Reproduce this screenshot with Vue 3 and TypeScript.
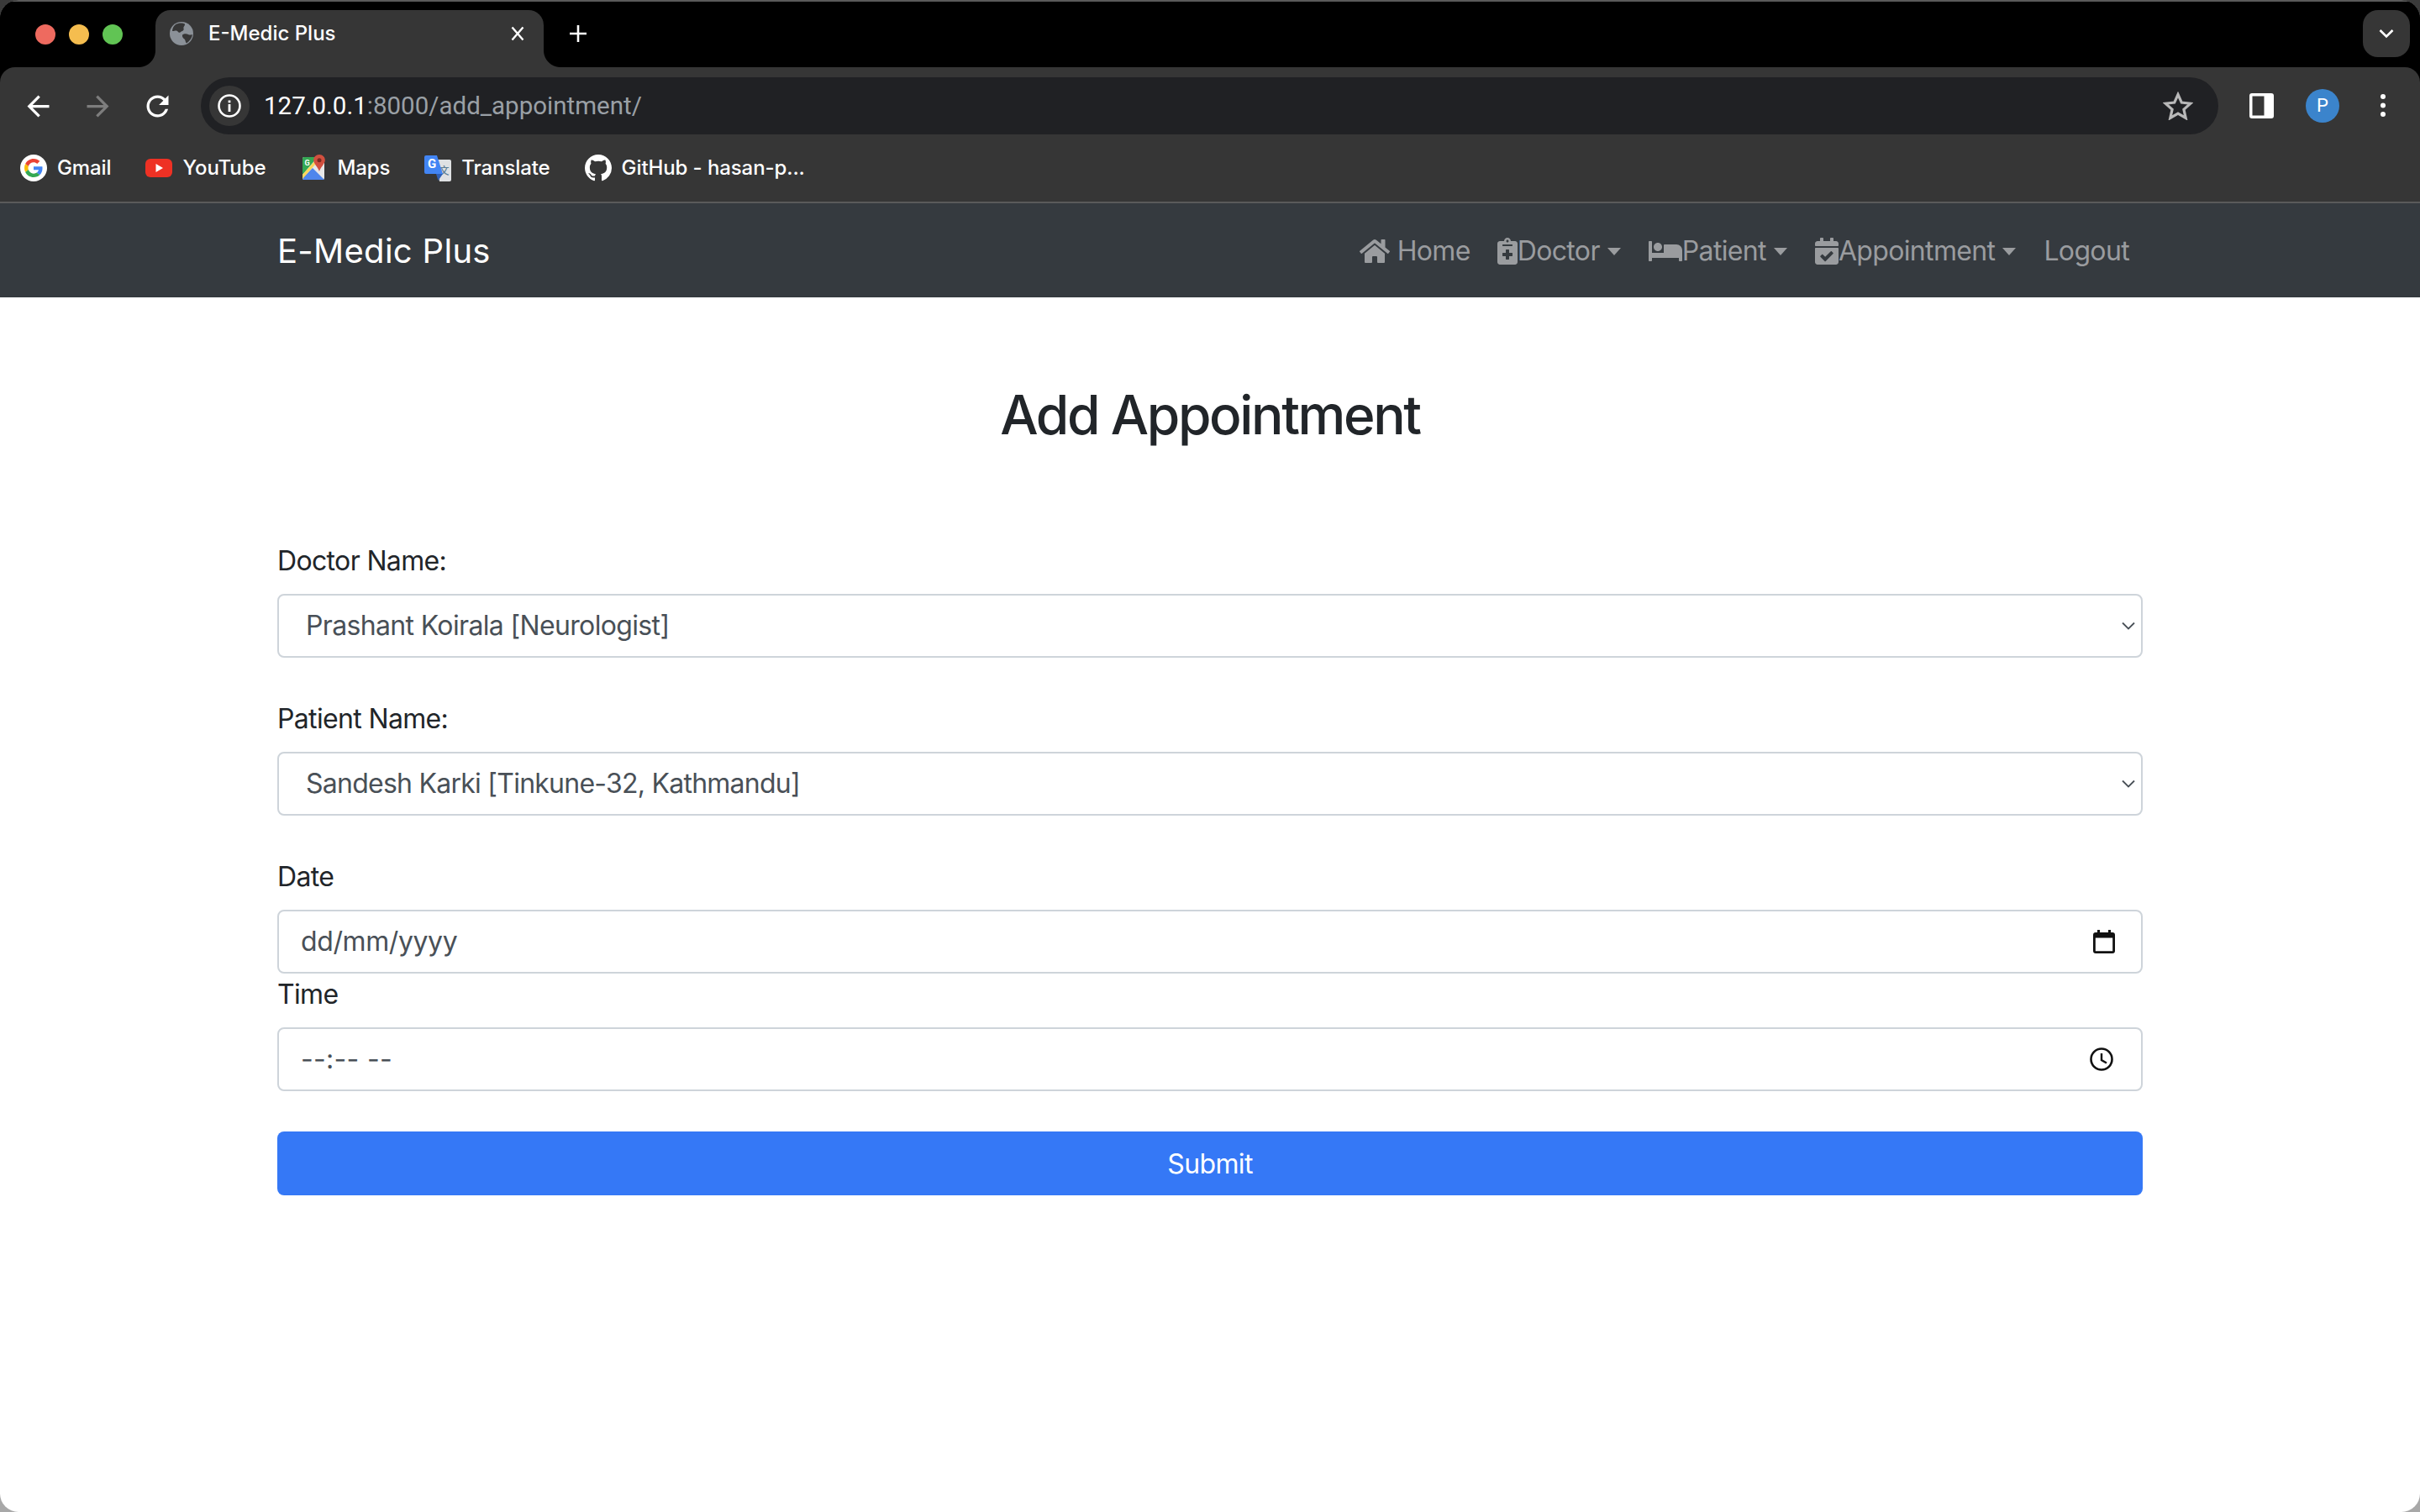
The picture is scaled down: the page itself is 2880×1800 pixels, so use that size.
<template>
  <div class="window">
    <div class="chrome">
      <header class="tabbar">
        <div class="lights">
          <span class="light red"></span>
          <span class="light amber"></span>
          <span class="light green"></span>
        </div>
        <div class="tab">
          <svg class="favicon" viewBox="0 0 28 28">
            <circle cx="14" cy="14" r="14" fill="#8b9198" />
            <path d="M8 2.500c3-1.500 8-1.500 10 0 .5 2-2 3-1.500 5.500 1 2.500-2.500 3-4 4.500-2.500 1-2.500-1.500-4.500-2-1.500-.5-3.500 1-5 .5C3 7.500 5 4 8 2.500z" fill="#363636" />
            <path d="M15 15.500c2-1.500 5-1.500 7-.5 1.500 1 3.500.5 5 0-.5 4-3 8-7 10.500-1.500-1-1-3.500-2.500-5-1.500-1-3-2.500-2.500-5z" fill="#363636" />
          </svg>
          <span class="tab-title">E-Medic Plus</span>
          <svg class="tab-close" viewBox="0 0 16 18">
            <path d="M1.500 1.500l13 15M14.500 1.500l-13 15" stroke="#fff" stroke-width="2.400" fill="none" />
          </svg>
        </div>
        <svg class="tab-new" viewBox="0 0 20 20">
          <path d="M10 0v20M0 10h20" stroke="#fff" stroke-width="2.600" fill="none" />
        </svg>
        <div class="tab-search">
          <svg viewBox="0 0 18 12" width="18" height="12">
            <path d="M1.500 2l7.500 7.500L16.500 2" stroke="#fff" stroke-width="2.600" fill="none" />
          </svg>
        </div>
      </header>

      <div class="toolbar">
        <svg class="tool" viewBox="0 0 24 24">
          <path d="M20 11H7.830l5.590-5.590L12 4l-8 8 8 8 1.410-1.410L7.830 13H20v-2z" fill="#fff" />
        </svg>
        <svg class="tool" viewBox="0 0 24 24">
          <path d="M4 11h12.170l-5.590-5.590L12 4l8 8-8 8-1.410-1.410L16.170 13H4v-2z" fill="#7d7d7d" />
        </svg>
        <svg class="tool" viewBox="0 0 24 24">
          <path d="M17.650 6.350C16.200 4.900 14.210 4 12 4c-4.420 0-7.990 3.580-7.990 8s3.570 8 7.990 8c3.730 0 6.840-2.550 7.730-6h-2.080c-.82 2.330-3.040 4-5.650 4-3.310 0-6-2.690-6-6s2.690-6 6-6c1.660 0 3.140.69 4.220 1.780L13 11h7V4l-2.350 2.350z" fill="#fff" />
        </svg>
        <div class="omnibox">
          <span class="site-chip">
            <svg viewBox="0 0 28 28" width="28" height="28">
              <circle cx="14" cy="14" r="12.500" stroke="#fff" stroke-width="2.600" fill="none" />
              <rect x="12.600" y="12" width="2.800" height="9" fill="#fff" />
              <rect x="12.600" y="7.500" width="2.800" height="2.800" fill="#fff" />
            </svg>
          </span>
          <span class="url"><b>127.0.0.1</b>:8000/add_appointment/</span>
          <svg class="star" viewBox="0 0 36 34">
            <path d="M18 3.500l4.300 9.600 10.500 1.100-7.900 7 2.300 10.300L18 26.200 8.800 31.500l2.300-10.300-7.900-7 10.500-1.100z" stroke="#b8b8b8" stroke-width="3.200" fill="none" />
          </svg>
        </div>
        <svg class="side-panel" viewBox="0 0 29 30">
          <rect width="29" height="30" rx="3" fill="#fff" />
          <rect x="3.500" y="3.500" width="14" height="23" fill="#363636" />
        </svg>
        <span class="avatar">P</span>
        <svg class="kebab" viewBox="0 0 8 30">
          <circle cx="4" cy="4" r="3" fill="#fff" />
          <circle cx="4" cy="14.500" r="3" fill="#fff" />
          <circle cx="4" cy="25" r="3" fill="#fff" />
        </svg>
      </div>

      <div class="bookmarks">
        <a class="bookmark">
          <span class="google">
            <svg viewBox="0 0 48 48" width="22" height="22">
              <path fill="#ea4335" d="M24 9.500c3.540 0 6.710 1.220 9.210 3.600l6.850-6.850C35.900 2.380 30.470 0 24 0 14.620 0 6.510 5.380 2.560 13.220l7.980 6.190C12.430 13.720 17.740 9.500 24 9.500z" />
              <path fill="#4285f4" d="M46.980 24.550c0-1.570-.15-3.090-.38-4.550H24v9.020h12.940c-.58 2.960-2.260 5.480-4.780 7.180l7.730 6c4.510-4.180 7.090-10.360 7.090-17.650z" />
              <path fill="#fbbc05" d="M10.530 28.590c-.5-1.450-.78-2.990-.78-4.590s.27-3.140.78-4.590l-7.980-6.190C.92 16.460 0 20.120 0 24c0 3.880.92 7.540 2.560 10.780l7.970-6.190z" />
              <path fill="#34a853" d="M24 48c6.480 0 11.930-2.130 15.890-5.810l-7.730-6c-2.150 1.450-4.920 2.300-8.160 2.300-6.260 0-11.570-4.220-13.470-9.910l-7.980 6.190C6.510 42.620 14.620 48 24 48z" />
            </svg>
          </span>
          Gmail
        </a>
        <a class="bookmark">
          <svg class="bm-icon" viewBox="0 0 32 32">
            <rect y="5" width="32" height="22" rx="6" fill="#ee3124" />
            <path d="M12.500 11v10l8.500-5z" fill="#fff" />
          </svg>
          YouTube
        </a>
        <a class="bookmark">
          <svg class="bm-icon" viewBox="0 0 32 32">
            <rect x="3" y="3" width="26" height="27" rx="2" fill="#e8e8e8" />
            <path d="M3 5a2 2 0 0 1 2-2h16L3 24z" fill="#34a853" />
            <path d="M3 28l12-12 14 14H5a2 2 0 0 1-2-2z" fill="#4f86ec" />
            <path d="M3 24L19 6l2.500 2L3 29z" fill="#fbd75b" />
            <text x="5.500" y="13" class="maps-g">G</text>
            <path d="M23 0c-4 0-6.800 3-6.800 6.500 0 4.500 5 8 6.800 13.500 1.800-5.500 6.800-9 6.800-13.500C29.800 3 27 0 23 0z" fill="#d2503f" />
            <circle cx="23" cy="6.800" r="2.500" fill="#7a2a20" />
          </svg>
          Maps
        </a>
        <a class="bookmark">
          <svg class="bm-icon" viewBox="0 0 32 32">
            <path d="M14 6h16a2 2 0 0 1 2 2v22a2 2 0 0 1-2 2H18z" fill="#dfe1e3" />
            <text x="17.500" y="24" class="translate-zh">文</text>
            <path d="M2 1h13l7 22H2a2 2 0 0 1-2-2V3a2 2 0 0 1 2-2z" fill="#4285f4" />
            <path d="M14 23h8l-5.500 8z" fill="#2f5fb5" />
            <text x="4" y="16" class="translate-g">G</text>
          </svg>
          Translate
        </a>
        <a class="bookmark">
          <svg class="bm-icon" viewBox="0 0 16 16">
            <path fill="#fff" d="M8 0C3.580 0 0 3.580 0 8c0 3.540 2.290 6.530 5.470 7.590.4.07.55-.17.55-.38 0-.19-.01-.82-.01-1.490-2.010.37-2.530-.49-2.690-.94-.09-.23-.48-.94-.82-1.130-.28-.15-.68-.52-.01-.53.63-.01 1.080.58 1.230.82.72 1.210 1.870.87 2.330.66.07-.52.28-.87.51-1.070-1.780-.2-3.640-.89-3.640-3.950 0-.87.31-1.590.82-2.150-.08-.2-.36-1.020.08-2.120 0 0 .67-.21 2.200.82.64-.18 1.320-.27 2-.27.68 0 1.360.09 2 .27 1.530-1.040 2.200-.82 2.200-.82.44 1.100.16 1.920.08 2.120.51.56.82 1.270.82 2.150 0 3.070-1.870 3.750-3.650 3.950.29.25.54.73.54 1.480 0 1.070-.01 1.930-.01 2.200 0 .21.15.46.55.38A8.013 8.013 0 0016 8c0-4.420-3.580-8-8-8z" />
          </svg>
          GitHub - hasan-p...
        </a>
      </div>
    </div>

    <nav class="navbar">
      <a class="brand">E-Medic Plus</a>
      <ul class="nav-list">
        <li v-for="item in navItems" :key="item.label" class="nav-link">
          <svg v-if="item.path" class="nav-icon" :viewBox="item.box" :style="{ width: item.width + 'px' }">
            <path :d="item.path" fill="currentColor" />
          </svg>
          <span v-if="item.spaced" class="nav-space"></span>
          {{ item.label }}
          <span v-if="item.caret" class="caret"></span>
        </li>
      </ul>
    </nav>

    <main class="container">
      <h1 class="title">Add Appointment</h1>
      <form @submit.prevent>
        <div class="group">
          <label class="label">Doctor Name:</label>
          <div class="control select-control">
            <select v-model="doctor" class="select">
              <option v-for="d in doctors" :key="d">{{ d }}</option>
            </select>
            <svg class="chevron" viewBox="0 0 16 10">
              <path d="M1 1.500l7 7 7-7" stroke="#495057" stroke-width="1.800" fill="none" />
            </svg>
          </div>
        </div>
        <div class="group">
          <label class="label">Patient Name:</label>
          <div class="control select-control">
            <select v-model="patient" class="select tight">
              <option v-for="p in patients" :key="p">{{ p }}</option>
            </select>
            <svg class="chevron" viewBox="0 0 16 10">
              <path d="M1 1.500l7 7 7-7" stroke="#495057" stroke-width="1.800" fill="none" />
            </svg>
          </div>
        </div>
        <label class="label">Date</label>
        <div class="control">
          <input class="input" type="text" value="dd/mm/yyyy" />
          <svg class="calendar" viewBox="0 0 26 28">
            <path d="M5 0h3v3h10V0h3v3h2a3 3 0 0 1 3 3v19a3 3 0 0 1-3 3H3a3 3 0 0 1-3-3V6a3 3 0 0 1 3-3h2zM2.800 9.500V25.200h20.400V9.500z" fill="#111" />
          </svg>
        </div>
        <label class="label">Time</label>
        <div class="control">
          <input class="input time-input" type="text" value="--:-- --" />
          <svg class="clock" viewBox="0 0 28 28">
            <circle cx="14" cy="14" r="12.500" stroke="#111" stroke-width="2.600" fill="none" />
            <path d="M14 7v8l6 3.500" stroke="#111" stroke-width="2.400" fill="none" />
          </svg>
        </div>
        <button class="submit" type="submit">Submit</button>
      </form>
    </main>
  </div>
</template>

<script setup lang="ts">
import { ref } from "vue";

interface NavItem {
  label: string;
  path?: string;
  box?: string;
  width?: number;
  spaced?: boolean;
  caret?: boolean;
}

const navItems: NavItem[] = [
  {
    label: "Home",
    box: "0 0 576 512",
    width: 36,
    spaced: true,
    path: "M280.37 148.26L96 300.11V464a16 16 0 0 0 16 16l112.06-.29a16 16 0 0 0 15.92-16V368a16 16 0 0 1 16-16h64a16 16 0 0 1 16 16v95.64a16 16 0 0 0 16 16.05L464 480a16 16 0 0 0 16-16V300L295.67 148.26a12.19 12.19 0 0 0-15.3 0zM571.6 251.47L488 182.56V44.05a12 12 0 0 0-12-12h-56a12 12 0 0 0-12 12v72.61L318.47 43a48 48 0 0 0-61 0L4.34 251.47a12 12 0 0 0-1.6 16.9l25.5 31A12 12 0 0 0 45.15 301l235.22-193.74a12.19 12.19 0 0 1 15.3 0L530.9 301a12 12 0 0 0 16.9-1.6l25.5-31a12 12 0 0 0-1.7-16.93z",
  },
  {
    label: "Doctor",
    box: "0 0 384 512",
    width: 24,
    caret: true,
    path: "M336 64h-80c0-35.3-28.7-64-64-64s-64 28.7-64 64H48C21.5 64 0 85.5 0 112v352c0 26.5 21.5 48 48 48h288c26.5 0 48-21.5 48-48V112c0-26.5-21.5-48-48-48zM192 40c13.3 0 24 10.7 24 24s-10.7 24-24 24-24-10.7-24-24 10.7-24 24-24zm96 304c0 4.4-3.6 8-8 8h-56v56c0 4.4-3.6 8-8 8h-48c-4.4 0-8-3.6-8-8v-56h-56c-4.4 0-8-3.6-8-8v-48c0-4.4 3.6-8 8-8h56v-56c0-4.4 3.6-8 8-8h48c4.4 0 8 3.6 8 8v56h56c4.4 0 8 3.6 8 8v48zm0-192c0 4.4-3.6 8-8 8H104c-4.4 0-8-3.6-8-8v-16c0-4.4 3.6-8 8-8h176c4.4 0 8 3.6 8 8v16z",
  },
  {
    label: "Patient",
    box: "0 0 640 512",
    width: 40,
    caret: true,
    path: "M176 256c44.11 0 80-35.89 80-80s-35.89-80-80-80-80 35.89-80 80 35.89 80 80 80zm352-128H304c-8.84 0-16 7.16-16 16v144H64V80c0-8.84-7.16-16-16-16H16C7.16 64 0 71.16 0 80v352c0 8.84 7.16 16 16 16h32c8.84 0 16-7.16 16-16v-48h512v48c0 8.84 7.16 16 16 16h32c8.84 0 16-7.16 16-16V240c0-61.86-50.14-112-112-112z",
  },
  {
    label: "Appointment",
    box: "0 0 448 512",
    width: 28,
    caret: true,
    path: "M436 160H12c-6.627 0-12-5.373-12-12v-36c0-26.51 21.49-48 48-48h48V12c0-6.627 5.373-12 12-12h40c6.627 0 12 5.373 12 12v52h128V12c0-6.627 5.373-12 12-12h40c6.627 0 12 5.373 12 12v52h48c26.51 0 48 21.49 48 48v36c0 6.627-5.373 12-12 12zM12 192h424c6.627 0 12 5.373 12 12v260c0 26.51-21.49 48-48 48H48c-26.51 0-48-21.49-48-48V204c0-6.627 5.373-12 12-12zm333.296 95.947l-28.169-28.398c-4.667-4.705-12.265-4.736-16.97-.068L194.12 364.665l-45.98-46.352c-4.667-4.705-12.266-4.736-16.971-.068l-28.397 28.17c-4.705 4.667-4.736 12.265-.068 16.97l82.601 83.269c4.667 4.705 12.265 4.736 16.97.068l142.953-141.805c4.705-4.667 4.736-12.265.068-16.97z",
  },
  { label: "Logout" },
];

const doctors = ["Prashant Koirala [Neurologist]"];
const patients = ["Sandesh Karki [Tinkune-32, Kathmandu]"];
const doctor = ref(doctors[0]);
const patient = ref(patients[0]);
</script>

<style>
html {
  background: linear-gradient(#3a3a3a 50%, #a8a8a8 50%);
}
</style>

<style scoped>
.window {
  width: 2880px;
  height: 1800px;
  background: #fff;
  border-radius: 22px;
  overflow: hidden;
  font-family: Inter, "Liberation Sans", sans-serif;
  color: #212529;
  font-size: 32px;
  line-height: 1.5;
  letter-spacing: -0.65px;
}

.chrome {
  background: #000;
}

.tabbar {
  height: 80px;
  box-sizing: border-box;
  background: #000;
  border-top: 2px solid #5a5a5a;
  display: flex;
  align-items: flex-start;
  padding: 10px 12px 0 42px;
}

.lights {
  display: flex;
  gap: 16px;
  margin-top: 17px;
}

.light {
  width: 24px;
  height: 24px;
  border-radius: 50%;
}

.red {
  background: #ee6a5f;
}

.amber {
  background: #f5bd4f;
}

.green {
  background: #61c454;
}

.tab {
  position: relative;
  width: 462px;
  height: 68px;
  margin-left: 39px;
  box-sizing: border-box;
  background: #363636;
  border-radius: 18px 18px 0 0;
  display: flex;
  align-items: center;
  padding: 0 23px 12px 17px;
}

.tab::before,
.tab::after {
  content: "";
  position: absolute;
  bottom: 0;
  width: 20px;
  height: 20px;
}

.tab::before {
  left: -20px;
  background: radial-gradient(circle at 0 0, #000 19.5px, #363636 20.5px);
}

.tab::after {
  right: -20px;
  background: radial-gradient(circle at 100% 0, #000 19.5px, #363636 20.5px);
}

.favicon {
  width: 28px;
  height: 28px;
}

.tab-title {
  margin-left: 18px;
  flex: 1;
  color: #fff;
  font-size: 24px;
  font-weight: 500;
  line-height: 32px;
  letter-spacing: 0;
}

.tab-close {
  width: 16px;
  height: 18px;
}

.tab-new {
  width: 20px;
  height: 20px;
  margin: 18px 0 0 31px;
}

.tab-search {
  width: 56px;
  height: 56px;
  margin-left: auto;
  background: #363636;
  border-radius: 18px;
  display: flex;
  align-items: center;
  justify-content: center;
}

.toolbar {
  height: 80px;
  box-sizing: border-box;
  background: #363636;
  border-radius: 18px 18px 0 0;
  display: flex;
  align-items: center;
  gap: 32px;
  padding: 12px 40px 0 26px;
}

.tool {
  width: 39px;
  height: 39px;
  flex: none;
}

.omnibox {
  flex: 1;
  min-width: 0;
  height: 68px;
  margin-right: 5px;
  background: #202124;
  border-radius: 34px;
  display: flex;
  align-items: center;
  padding: 0 30px 0 10px;
}

.site-chip {
  width: 48px;
  height: 48px;
  border-radius: 50%;
  background: #363636;
  display: flex;
  align-items: center;
  justify-content: center;
}

.url {
  margin-left: 17px;
  flex: 1;
  font-family: Roboto, Inter, sans-serif;
  font-size: 29.5px;
  letter-spacing: 0;
  color: #9aa0a6;
}

.url b {
  font-weight: 400;
  color: #fff;
}

.star {
  width: 36px;
  height: 34px;
}

.side-panel {
  width: 29px;
  height: 30px;
  flex: none;
}

.avatar {
  width: 40px;
  height: 40px;
  flex: none;
  margin-left: 6px;
  border-radius: 50%;
  background: #3b84cc;
  color: #fff;
  font-family: Roboto, sans-serif;
  font-size: 22px;
  line-height: 40px;
  text-align: center;
  letter-spacing: 0;
}

.kebab {
  width: 8px;
  height: 30px;
  flex: none;
  margin-left: 16px;
}

.bookmarks {
  height: 80px;
  box-sizing: border-box;
  background: #363636;
  display: flex;
  align-items: center;
  gap: 41px;
  padding: 0 0 0 24px;
}

.bookmark {
  display: flex;
  align-items: center;
  gap: 12px;
  color: #fff;
  font-size: 24px;
  font-weight: 500;
  line-height: 32px;
  letter-spacing: -0.1px;
}

.google {
  width: 32px;
  height: 32px;
  border-radius: 50%;
  background: #fff;
  display: flex;
  align-items: center;
  justify-content: center;
}

.bm-icon {
  width: 32px;
  height: 32px;
}

.maps-g {
  font-family: Roboto, sans-serif;
  font-size: 9px;
  font-weight: 700;
  fill: #fff;
}

.translate-g {
  font-family: Roboto, sans-serif;
  font-size: 15px;
  font-weight: 700;
  fill: #fff;
}

.translate-zh {
  font-family: "Noto Sans CJK SC", sans-serif;
  font-size: 12px;
  fill: #5f7f95;
}

.navbar {
  height: 114px;
  box-sizing: border-box;
  border-top: 2px solid #5a5a5a;
  background: #353a3f;
  display: flex;
  align-items: center;
  padding: 0 330px;
}

.brand {
  color: #fff;
  font-size: 40px;
  letter-spacing: 0.3px;
  padding-top: 1px;
}

.nav-list {
  display: flex;
  margin: 0 0 0 auto;
  padding: 2px 0 0;
  list-style: none;
}

.nav-link {
  display: flex;
  align-items: center;
  padding: 0 16px;
  color: #9a9c9f;
  letter-spacing: -0.65px;
}

.nav-icon {
  height: 32px;
  flex: none;
}

.nav-space {
  width: 9px;
}

.caret {
  margin: 0 1px 0 9px;
  border-top: 9px solid;
  border-left: 8.5px solid transparent;
  border-right: 8.5px solid transparent;
}

.container {
  padding: 102px 330px 0;
}

.title {
  margin: 0 0 110px;
  text-align: center;
  font-size: 64px;
  font-weight: 500;
  line-height: 1.2;
  letter-spacing: -2.4px;
}

.group {
  margin-bottom: 48px;
}

.label {
  display: block;
  padding-top: 1px;
  margin-bottom: 15px;
}

.control {
  height: 76px;
  box-sizing: border-box;
  border: 2px solid #ced4da;
  border-radius: 8px;
  display: flex;
  align-items: center;
  padding-right: 31px;
}

.select-control {
  padding-right: 7px;
}

.select {
  flex: 1;
  appearance: none;
  border: 0;
  outline: 0;
  background: transparent;
  padding: 1px 0 0 32px;
  font: inherit;
  letter-spacing: inherit;
  color: #495057;
}

.tight {
  letter-spacing: -0.75px;
}

.input {
  flex: 1;
  border: 0;
  outline: 0;
  background: transparent;
  padding: 1px 0 0 26px;
  font: inherit;
  letter-spacing: -0.4px;
  color: #495057;
}

.time-input {
  letter-spacing: 0.3px;
}

.chevron {
  width: 16px;
  height: 10px;
}

.calendar {
  width: 26px;
  height: 28px;
}

.clock {
  width: 28px;
  height: 28px;
  margin-right: 2px;
}

.submit {
  display: block;
  width: 100%;
  height: 76px;
  margin-top: 48px;
  padding: 2px 0 0;
  border: 0;
  border-radius: 8px;
  background: #3578f6;
  color: #fff;
  font: inherit;
  letter-spacing: -0.65px;
}
</style>
